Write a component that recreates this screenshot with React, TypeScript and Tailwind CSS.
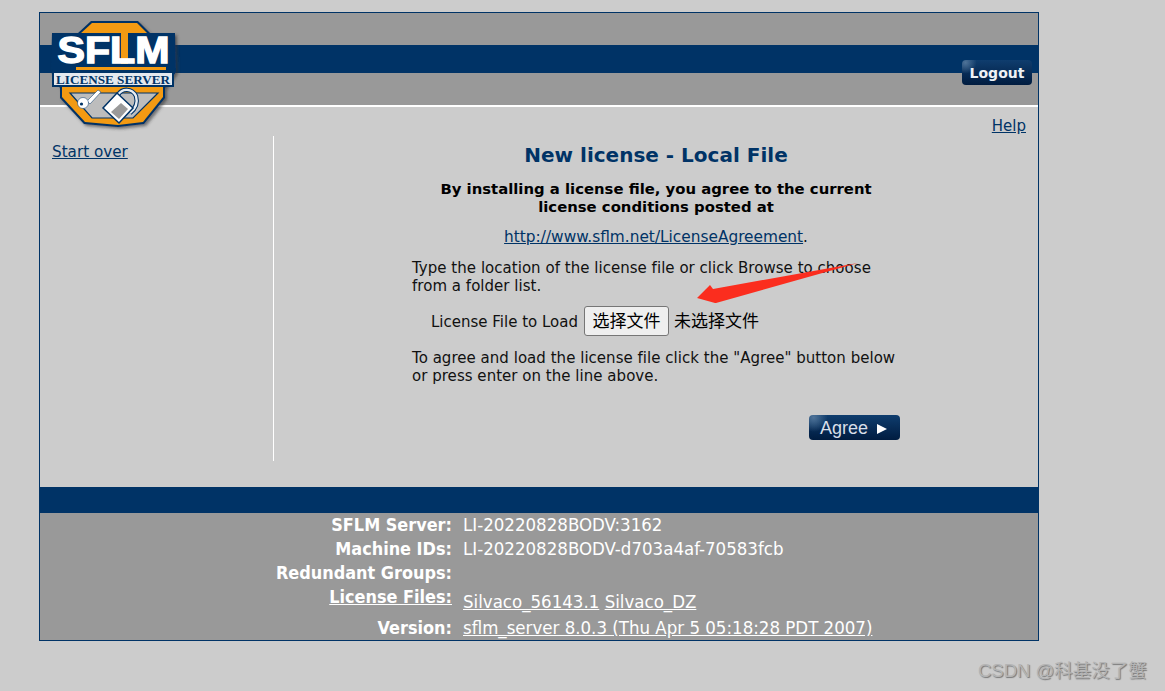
const font = "font-['DejaVu_Sans','Noto_Sans_CJK_SC',sans-serif]";

function Logo() {
  return (
    <svg viewBox="45 15 140 120" className="absolute left-[5px] top-[2px] w-[140px] h-[120px]">
      <defs>
        <filter id="soft" x="-10%" y="-10%" width="125%" height="125%">
          <feDropShadow dx="2" dy="2" stdDeviation="1.5" floodColor="#333" floodOpacity="0.6" />
        </filter>
      </defs>
      <g filter="url(#soft)">
        <polygon points="91,21 138,21 150,33 175,33 176,72 165,88 165,98 144,124 118,127 84,124 60,98 60,88 51,72 52,33 78,33" fill="#003366" />
      </g>
      <polygon points="92,23 137,23 148,34 80,34" fill="#f39a12" />
      <polygon points="62,87 163,87 163,97 143,122 118,125 85,122 62,97" fill="#f39a12" />
      <polygon points="70,93 158,93 133,118 92,118" fill="#bdbdbd" stroke="#003366" strokeWidth="1.2" />
      <rect x="52" y="33" width="123" height="39" rx="4" fill="#003366" />
      <rect x="121" y="32" width="7" height="32" fill="#f39a12" />
      <rect x="76" y="67" width="90" height="3" fill="#f39a12" />
      <text x="113.5" y="63" textAnchor="middle" fill="#fff" stroke="#fff" strokeWidth="1.4" className="font-['Liberation_Sans',sans-serif]" fontWeight="700" fontSize="37" textLength="112" lengthAdjust="spacingAndGlyphs">SFLM</text>
      <rect x="52" y="71" width="122" height="16" fill="#003366" />
      <rect x="54" y="73" width="118" height="12" fill="#e4e9ef" />
      <text x="113" y="83.5" textAnchor="middle" fill="#003366" className="font-['Liberation_Serif',serif]" fontWeight="700" fontSize="13.5" textLength="114" lengthAdjust="spacingAndGlyphs">LICENSE SERVER</text>
      <g fill="#fff" stroke="#003366" strokeWidth="0.5">
        <polygon points="87,101 98,90 101,92 90,104" />
        <circle cx="83" cy="103" r="5.5" />
      </g>
      <circle cx="81.5" cy="104" r="1.6" fill="#003366" />
      <path d="M118,95 C122,88 132,88 136,96 C138,103 135,109 130,113" fill="none" stroke="#003366" strokeWidth="4.5" />
      <path d="M118,95 C122,88 132,88 136,96 C138,103 135,109 130,113" fill="none" stroke="#e8edf2" strokeWidth="2.4" />
      <polygon points="117,93 133,108 119,123 103,108" fill="#fff" stroke="#003366" strokeWidth="1.5" />
      <polygon points="121,103 128,109 119,119 111,112" fill="#9a9a9a" />
    </svg>
  );
}

function Row(props: { label: React.ReactNode; children?: React.ReactNode; height: string; valueClass?: string }) {
  return (
    <div className={`flex ${props.height}`}>
      <div className="w-[412px] shrink-0 text-right font-bold text-[17.9px]">{props.label}</div>
      <div className={`pl-[11px] text-[18.5px] ${props.valueClass ?? ""}`}>{props.children}</div>
    </div>
  );
}

const btn = "bg-[radial-gradient(circle_at_5%_10%,#4f7398_0,transparent_16%),linear-gradient(#0f3d6e,#001c40)]";

export default function App() {
  return (
    <div className={`relative h-screen overflow-hidden bg-[#cccccc] pl-[39px] pt-3 ${font}`}>
      <div className="relative w-[1000px] h-[629px] border border-[#003366] flex flex-col">
        <div className="h-[94px] shrink-0 flex flex-col border-b-2 border-white bg-[#999999]">
          <div className="h-8" />
          <div className="h-[28px] bg-[#003366]" />
        </div>
        <Logo />
        <button className={`absolute left-[922px] top-[47px] w-[70px] h-[25px] rounded-[4px] pt-px ${btn} text-[#eef2f6] font-bold text-[14px] leading-[25px]`}>
          Logout
        </button>

        <div className="h-[380px] shrink-0 relative flex">
          <div className="w-[233px] shrink-0 pl-3 pt-9 text-[15.2px] leading-[18px]">
            <a className="underline text-[#003366]">Start over</a>
          </div>
          <div className="mt-[29px] h-[325px] flex-1 border-l border-white text-[15px] leading-[18px] text-[#111111]">
            <h1 className="mt-[7px] text-center text-[20px] leading-6 font-bold text-[#003366]">New license - Local File</h1>
            <div className="mx-auto w-[488px] pt-[13px]">
              <p className="text-center font-bold text-black text-[14.85px]">
                By installing a license file, you agree to the current<br />license conditions posted at
              </p>
              <p className="mt-3 text-center">
                <a className="underline text-[#003366] text-[15.35px]">http://www.sflm.net/LicenseAgreement</a>.
              </p>
              <p className="mt-[13px] tracking-[0.03px]">
                Type the location of the license file or click Browse to choose<br />from a folder list.
              </p>
              <div className="mt-[11px] flex items-center h-[30px] pl-[19px]">
                <span className="pt-px">License File to Load</span>
                <button className="ml-[6px] h-[30px] w-[85px] rounded-[3px] border border-[#767676] bg-[#efefef] text-[17px] text-black">选择文件</button>
                <span className="ml-[5px] text-[17px] text-black">未选择文件</span>
              </div>
              <p className="mt-[13px] tracking-[0.03px]">
                To agree and load the license file click the "Agree" button below<br />or press enter on the line above.
              </p>
              <div className="mt-[30px] flex justify-end">
                <button className={`h-[25px] w-[91px] rounded-[4px] pt-0.5 pr-0.5 ${btn} text-[#d8dfe8] text-[18px] leading-[25px] font-['Liberation_Sans',sans-serif] flex items-center justify-center gap-[9px]`}>
                  Agree
                  <span className="w-0 h-0 border-y-[5px] border-y-transparent border-l-[10px] border-l-white" />
                </button>
              </div>
            </div>
          </div>
          <a className="absolute right-3 top-[10px] text-[15px] leading-[18px] underline text-[#003366]">Help</a>
        </div>

        <div className="h-[26px] shrink-0 bg-[#003366]" />
        <div className="flex-1 bg-[#999999] text-white leading-[24px] font-['DejaVu_Sans_Condensed','DejaVu_Sans',sans-serif]">
          <Row label="SFLM Server:" height="h-6">LI-20220828BODV:3162</Row>
          <Row label="Machine IDs:" height="h-6">LI-20220828BODV-d703a4af-70583fcb</Row>
          <Row label="Redundant Groups:" height="h-6" />
          <Row label={<a className="underline">License Files:</a>} height="h-[31px]" valueClass="pt-[5px]">
            <a className="underline">Silvaco_56143.1</a> <a className="underline">Silvaco_DZ</a>
          </Row>
          <Row label="Version:" height="h-6">
            <a className="underline">sflm_server 8.0.3 (Thu Apr 5 05:18:28 PDT 2007)</a>
          </Row>
        </div>
      </div>

      <svg viewBox="0 0 1165 691" className="absolute left-0 top-0 w-[1165px] h-[691px] pointer-events-none">
        <polygon points="858,263 716,303 715,303 697,298 710,285 713,289" fill="#fb2d1e" />
      </svg>
      <div className="absolute left-[978px] top-[659px] text-[18.5px] leading-6 text-[#b4b4b4] [text-shadow:1px_1px_1px_#777] font-['Liberation_Sans','Noto_Sans_CJK_SC',sans-serif]">
        CSDN @科基没了蟹
      </div>
    </div>
  );
}
